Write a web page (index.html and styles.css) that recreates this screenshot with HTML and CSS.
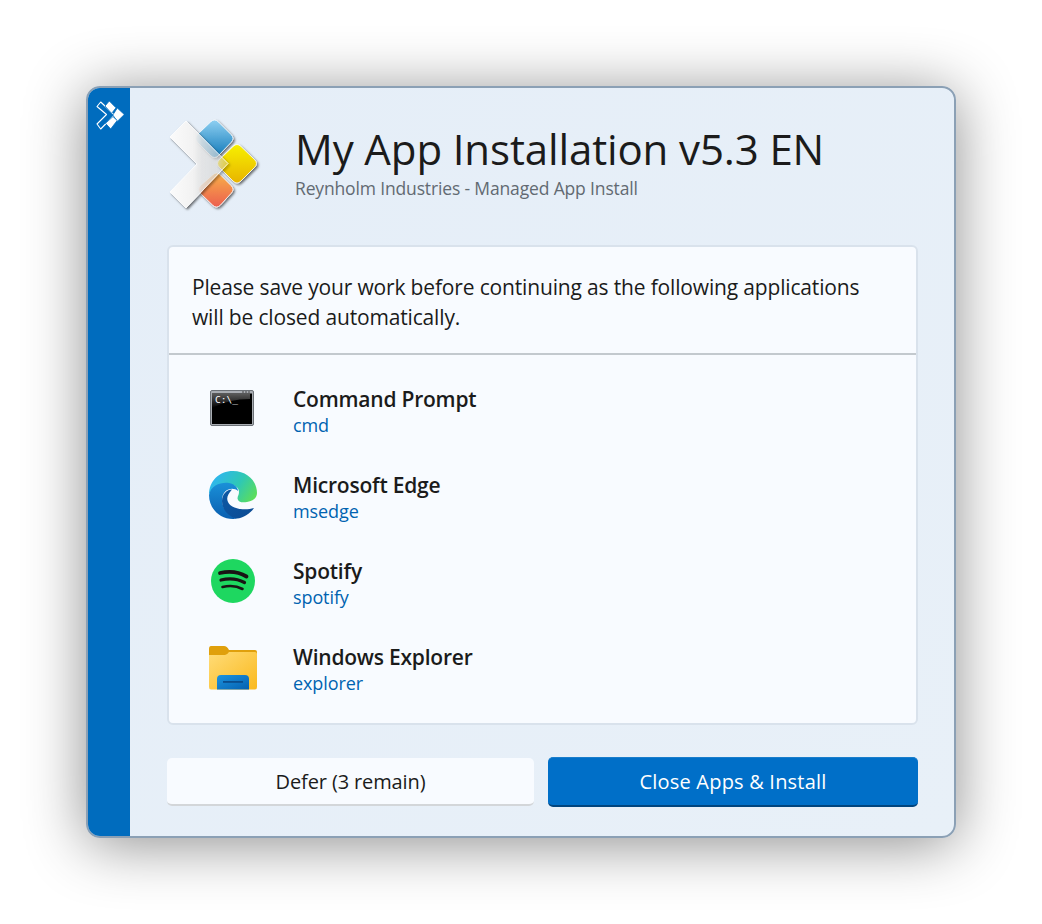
FILE: index.html
```html
<!DOCTYPE html>
<html lang="en">
<head>
<meta charset="utf-8">
<title>My App Installation</title>
<link rel="stylesheet" href="styles.css">
</head>
<body>
<div class="window">
  <aside class="rail">
    <svg class="rail-logo" viewBox="96 101 28 30" width="28" height="30">
      <path d="M100.700 102 L114.500 115 L100.700 129 L97 124 L106.500 114.500 L97 106.500 Z" fill="none" stroke="#fff" stroke-width="1.100" stroke-linejoin="round"/>
      <g fill="#fff" stroke="#006cbe" stroke-width=".8">
        <path d="M109.300 101 L116 107.800 L111.600 113.400 L105 106 Z"/>
        <path d="M117.300 108 L124.300 114.500 L117.300 121.400 L112.800 115 Z"/>
        <path d="M113 116.500 L117.200 120.500 L110.700 129 L105.500 123.300 Z"/>
      </g>
    </svg>
  </aside>
  <main class="main">
    <header class="head">
      <svg class="logo" viewBox="165 116 100 100" width="100" height="100">
        <defs>
          <linearGradient id="lb" x1="0" y1="0" x2="0" y2="1"><stop offset="0" stop-color="#8fd0f2"/><stop offset="1" stop-color="#0f78b8"/></linearGradient>
          <linearGradient id="ly" x1="0" y1="0" x2="0" y2="1"><stop offset="0" stop-color="#f7f000"/><stop offset="1" stop-color="#e8b400"/></linearGradient>
          <linearGradient id="lo" x1="0" y1="0" x2="0" y2="1"><stop offset="0" stop-color="#f8b048"/><stop offset="1" stop-color="#ec5f50"/></linearGradient>
          <linearGradient id="lw" gradientUnits="userSpaceOnUse" x1="170" y1="0" x2="228" y2="0"><stop offset="0" stop-color="#fbfbfb"/><stop offset=".4" stop-color="#f2f2f2"/><stop offset=".55" stop-color="#f2f2f2" stop-opacity=".72"/><stop offset=".8" stop-color="#f0f0f0" stop-opacity=".55"/><stop offset="1" stop-color="#f0f0f0" stop-opacity=".2"/></linearGradient>
          <filter id="ls" x="-20%" y="-20%" width="140%" height="140%"><feDropShadow dx="1.500" dy="1.500" stdDeviation="1.200" flood-color="#000" flood-opacity=".55"/></filter>
        </defs>
        <g stroke="#fff" stroke-width=".8" filter="url(#ls)">
          <path d="M210.500 122 Q214.500 118 218.500 122 L231 134.500 Q235 138.500 231 142.500 L218.500 155.500 Q214.500 159.500 210.500 155.500 L197.500 142.500 Q193.500 138.500 197.500 134.500 Z" fill="url(#lb)"/>
          <path d="M233 146.500 Q237 142.500 241 146.500 L254.500 159.500 Q258.500 163.500 254.500 167.500 L241 181 Q237 185 233 181 L219.500 167.500 Q215.500 163.500 219.500 159.500 Z" fill="url(#ly)"/>
          <path d="M212.500 175 Q216.500 171 220.500 175 L231 185.500 Q235 189.500 231 193.500 L220.500 205 Q216.500 209 212.500 205 L200.500 193.500 Q196.500 189.500 200.500 185.500 Z" fill="url(#lo)"/>
        </g>
        <path d="M186 121 L228 163.500 L186 208 L170 192 L197 164 L170 137 Z" fill="url(#lw)" stroke="#fff" stroke-width=".8" stroke-linejoin="round" filter="url(#ls)"/>
      </svg>
      <div class="head-text">
        <h1 class="title">My App Installation v5.3 EN</h1>
        <p class="subtitle">Reynholm Industries - Managed App Install</p>
      </div>
    </header>

    <section class="card">
      <p class="notice">Please save your work before continuing as the following applications<br>will be closed automatically.</p>
      <ul class="apps">
        <li class="app">
          <span class="app-icon">
            <svg viewBox="0 0 48 48" width="48" height="48">
              <defs><linearGradient id="cg" x1="0" y1="0" x2="0" y2="1"><stop offset="0" stop-color="#5c5c5c"/><stop offset="1" stop-color="#000"/></linearGradient></defs>
              <rect x="1.500" y="5.500" width="43" height="35" rx="1.500" fill="#a9adb3" stroke="#6d7278"/>
              <rect x="3" y="8.500" width="40" height="30.500" fill="#000"/>
              <path d="M3 8.500 H41 V14 Q20 14 3 23 Z" fill="url(#cg)"/>
              <path d="M33 7 h2 M36 7 h2 M39 7 h2" stroke="#444" stroke-width="1"/>
              <text x="6" y="18" class="cmd-glyph">C:\_</text>
            </svg>
          </span>
          <div class="app-text"><span class="app-name">Command Prompt</span><span class="app-proc">cmd</span></div>
        </li>
        <li class="app">
          <span class="app-icon">
            <svg viewBox="0 0 48 48" width="48" height="48">
              <defs>
                <linearGradient id="e1" gradientUnits="userSpaceOnUse" x1="10" y1="4" x2="46" y2="28"><stop offset="0" stop-color="#2fb8e8"/><stop offset=".5" stop-color="#2fc8b4"/><stop offset="1" stop-color="#5fdf55"/></linearGradient>
                <linearGradient id="e2" x1="0" y1="0" x2="0" y2="1"><stop offset="0" stop-color="#1a90d8"/><stop offset="1" stop-color="#0a5fb0"/></linearGradient>
                <linearGradient id="e3" x1="0" y1="0" x2="1" y2="1"><stop offset="0" stop-color="#0d5aa6"/><stop offset="1" stop-color="#0c4a92"/></linearGradient>
              </defs>
              <path d="M0 24 C0 10 10 0 24 0 C38 0 48 10 48 22 C48 27 44 30 38 31 C33 32 29 31 28.500 27.500 C28.500 25 30 24 30 21 C30 16 25 13.500 20 13.500 C10 13.500 2 17 0 24 Z" fill="url(#e1)"/>
              <path d="M0 24 C2 14 12 11 20 12 C26 13 29 17 29 20 C24 15 13 18 13 29 C13 37 19 44 28 47.600 C26 48 25 48 24 48 C10 48 0 37 0 24 Z" fill="url(#e2)"/>
              <path d="M13 30 C13 23 18 18.500 23 18.500 C19 23 17 27 19 31 C22 38 36 40 45 37 C41 43 34 47 28 47.600 C19 46 13 38 13 30 Z" fill="url(#e3)"/>
            </svg>
          </span>
          <div class="app-text"><span class="app-name">Microsoft Edge</span><span class="app-proc">msedge</span></div>
        </li>
        <li class="app">
          <span class="app-icon">
            <svg viewBox="0 0 48 48" width="48" height="48">
              <circle cx="24" cy="24" r="22" fill="#1ed760"/>
              <path d="M11 16 C20 14 30 15 37.500 19.500" fill="none" stroke="#191414" stroke-width="3.800" stroke-linecap="round"/>
              <path d="M12 23 C20 21 29 22 35.500 25.500" fill="none" stroke="#191414" stroke-width="3.200" stroke-linecap="round"/>
              <path d="M13.500 30 C20 28.500 28 29 33.500 32" fill="none" stroke="#191414" stroke-width="2.600" stroke-linecap="round"/>
            </svg>
          </span>
          <div class="app-text"><span class="app-name">Spotify</span><span class="app-proc">spotify</span></div>
        </li>
        <li class="app">
          <span class="app-icon">
            <svg viewBox="0 0 48 48" width="48" height="48">
              <defs>
                <linearGradient id="f1" x1="0" y1="0" x2="1" y2="1"><stop offset="0" stop-color="#ffdc78"/><stop offset="1" stop-color="#fab91e"/></linearGradient>
                <linearGradient id="f2" x1="0" y1="0" x2="1" y2="1"><stop offset="0" stop-color="#1c94de"/><stop offset="1" stop-color="#0560b0"/></linearGradient>
              </defs>
              <g transform="translate(0 3)">
                <path d="M0 3 Q0 0 2 0 H15 Q18 0 20 4 H46 Q48 4 48 6 V12 H0 Z" fill="#e0a00c"/>
                <path d="M0 9 H16 Q18 9 20 6 H46 Q48 6 48 8 V41 Q48 43.500 46 43.500 H2 Q0 43.500 0 41 Z" fill="url(#f1)"/>
                <path d="M8 43.500 V33 Q8 29 12 29 H36 Q40 29 40 33 V43.500 Z" fill="url(#f2)"/>
                <rect x="14" y="35" width="20" height="1.800" fill="#0a4d8c"/>
              </g>
            </svg>
          </span>
          <div class="app-text"><span class="app-name">Windows Explorer</span><span class="app-proc">explorer</span></div>
        </li>
      </ul>
    </section>

    <div class="actions">
      <button class="btn btn-defer">Defer (3 remain)</button>
      <button class="btn btn-go">Close Apps &amp; Install</button>
    </div>
  </main>
</div>
</body>
</html>
```

FILE: styles.css
```css
* { box-sizing: border-box; }
html, body { margin: 0; height: 100%; }
body {
  background: #fff;
  padding: 86px 0 0 86px;
  font-family: "Open Sans", "Noto Sans", sans-serif;
  color: #1b1b1b;
  overflow: hidden;
}
.window {
  width: 870px;
  height: 752px;
  display: flex;
  border: 2px solid #8ba0b5;
  border-radius: 14px;
  background: linear-gradient(135deg, #e5eef8, #e8f0f8);
  box-shadow: 0 6px 60px rgba(0, 0, 0, .45);
  overflow: hidden;
}
.rail {
  width: 42px;
  flex: none;
  background: #006cbe;
  padding: 13px 0 0 8px;
}
.rail-logo { display: block; }
.main {
  flex: 1;
  display: flex;
  flex-direction: column;
  padding: 0 36px 0 37px;
}
.head {
  height: 157px;
  padding-top: 28px;
  display: flex;
  align-items: flex-start;
  margin-left: -2px;
}
.logo { flex: none; display: block; }
.head-text { margin-left: 30px; }
.title {
  margin: 7px 0 0;
  font-size: 42px;
  line-height: 52px;
  font-weight: 400;
  letter-spacing: -.12px;
  white-space: nowrap;
}
.subtitle {
  margin: 1px 0 0;
  font-size: 17.5px;
  line-height: 24px;
  color: #626a72;
  letter-spacing: -.15px;
}
.card {
  height: 480px;
  background: #f8fbff;
  border: 2px solid #d9e2ec;
  border-radius: 6px;
}
.notice {
  margin: 0;
  height: 108px;
  padding: 25px 23px 0;
  font-size: 21px;
  line-height: 30px;
  letter-spacing: -.16px;
  border-bottom: 2px solid #c3c9ce;
  white-space: nowrap;
}
.apps {
  list-style: none;
  margin: 0;
  padding: 11px 0 0 40px;
}
.app {
  height: 86px;
  display: flex;
  align-items: center;
}
.app-icon { width: 48px; height: 48px; flex: none; }
.app-icon svg { display: block; }
.cmd-glyph {
  font-family: "DejaVu Sans Mono", monospace;
  font-size: 9.500px;
  fill: #fff;
}
.app-text {
  margin-left: 36px;
  padding-top: 3px;
  display: flex;
  flex-direction: column;
}
.app-name {
  font-size: 21px;
  line-height: 28px;
  font-weight: 600;
  letter-spacing: -.22px;
}
.app-proc {
  font-size: 18px;
  line-height: 24px;
  color: #0063b1;
  letter-spacing: -.1px;
}
.actions {
  margin-top: 32px;
  display: flex;
  align-items: center;
  gap: 14px;
}
.btn {
  border: 0;
  border-radius: 5px;
  font-family: inherit;
  font-size: 20px;
  padding: 0;
}
.btn-defer {
  width: 367px;
  height: 48px;
  background: #f8fbff;
  color: #1b1b1b;
  letter-spacing: -.12px;
  border-bottom: 2px solid #d3d6d9;
}
.btn-go {
  width: 370px;
  height: 50px;
  background: #006fc8;
  color: #fff;
  letter-spacing: .2px;
  border-top: 1px solid #1a7ecb;
  border-bottom: 2px solid #00457f;
}
```
